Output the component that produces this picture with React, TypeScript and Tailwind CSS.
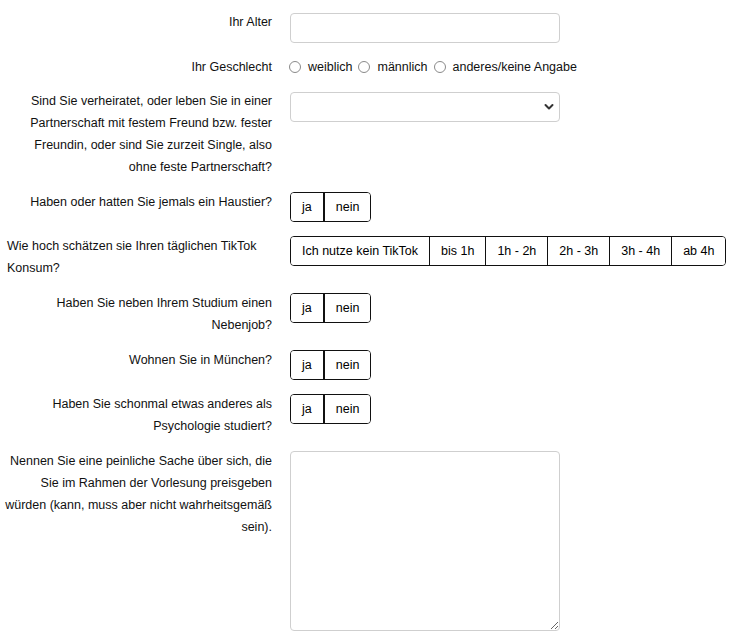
import React from 'react'

const font = "font-['Liberation_Sans',Arial,Helvetica,sans-serif]"

function Row({
  label,
  children,
  left = false,
  gap = 'mb-[13px]',
}: {
  label: React.ReactNode
  children: React.ReactNode
  left?: boolean
  gap?: string
}) {
  return (
    <div className={`flex items-start ${gap}`}>
      <div className={`w-[272px] shrink-0 ${left ? 'text-left pl-[7px]' : 'text-right'}`}>{label}</div>
      <div className="ml-[18px] shrink-0">{children}</div>
    </div>
  )
}

function Segmented({ options, thick = false }: { options: string[]; thick?: boolean }) {
  return (
    <div className="mt-[1px] flex h-[30px] rounded-[4px] border border-[#111] overflow-hidden">
      {options.map((o, i) => (
        <button
          key={o}
          type="button"
          className={`h-full px-[11px] whitespace-nowrap text-[12.5px] text-black bg-white ${
            i > 0 ? (thick ? 'border-l-2 border-[#111]' : 'border-l border-[#111]') : ''
          }`}
        >
          {o}
        </button>
      ))}
    </div>
  )
}

function Radio({ label, first = false }: { label: string; first?: boolean }) {
  return (
    <label className={`flex items-center ${first ? '-ml-[1px]' : 'ml-[6px]'}`}>
      <span className="w-[12px] h-[12px] rounded-full border border-[#8a8a8a] bg-white" />
      <span className="ml-[7px]">{label}</span>
    </label>
  )
}

export default function App() {
  return (
    <div className={`${font} w-[735px] min-h-[641px] bg-white pt-[11px] text-[12.5px] leading-[22px] text-[#111]`}>
      <Row label="Ihr Alter">
        <input type="text" className="mt-[2px] block w-[270px] h-[30px] rounded-[4px] border border-[#cfcfcf] bg-white" />
      </Row>

      <Row label="Ihr Geschlecht" gap="mb-[12px]">
        <div className="flex items-center h-[22px]">
          <Radio label="weiblich" first />
          <Radio label="männlich" />
          <Radio label="anderes/keine Angabe" />
        </div>
      </Row>

      <Row
        label={
          <>
            Sind Sie verheiratet, oder leben Sie in einer
            <br />
            Partnerschaft mit festem Freund bzw. fester
            <br />
            Freundin, oder sind Sie zurzeit Single, also
            <br />
            ohne feste Partnerschaft?
          </>
        }
      >
        <div className="relative mt-[2px] w-[270px] h-[30px]">
          <select className="appearance-none block w-full h-full rounded-[4px] border border-[#cfcfcf] bg-white" />
          <svg className="absolute right-[6px] top-[11px] w-[10px] h-[8px]" viewBox="0 0 10 8" fill="none">
            <path d="M1.5 2l3.5 3.5L8.5 2" stroke="#333" strokeWidth="2" strokeLinecap="round" strokeLinejoin="round" />
          </svg>
        </div>
      </Row>

      <Row label="Haben oder hatten Sie jemals ein Haustier?">
        <Segmented options={['ja', 'nein']} thick />
      </Row>

      <Row
        left
        label={
          <>
            Wie hoch schätzen sie Ihren täglichen TikTok
            <br />
            Konsum?
          </>
        }
      >
        <Segmented options={['Ich nutze kein TikTok', 'bis 1h', '1h - 2h', '2h - 3h', '3h - 4h', 'ab 4h']} />
      </Row>

      <Row
        label={
          <>
            Haben Sie neben Ihrem Studium einen
            <br />
            Nebenjob?
          </>
        }
      >
        <Segmented options={['ja', 'nein']} thick />
      </Row>

      <Row label="Wohnen Sie in München?">
        <Segmented options={['ja', 'nein']} thick />
      </Row>

      <Row
        label={
          <>
            Haben Sie schonmal etwas anderes als
            <br />
            Psychologie studiert?
          </>
        }
      >
        <Segmented options={['ja', 'nein']} thick />
      </Row>

      <Row
        label={
          <>
            Nennen Sie eine peinliche Sache über sich, die
            <br />
            Sie im Rahmen der Vorlesung preisgeben
            <br />
            würden (kann, muss aber nicht wahrheitsgemäß
            <br />
            sein).
          </>
        }
      >
        <textarea className="mt-[1px] block w-[270px] h-[180px] rounded-[4px] border border-[#cfcfcf] bg-white" />
      </Row>
    </div>
  )
}
